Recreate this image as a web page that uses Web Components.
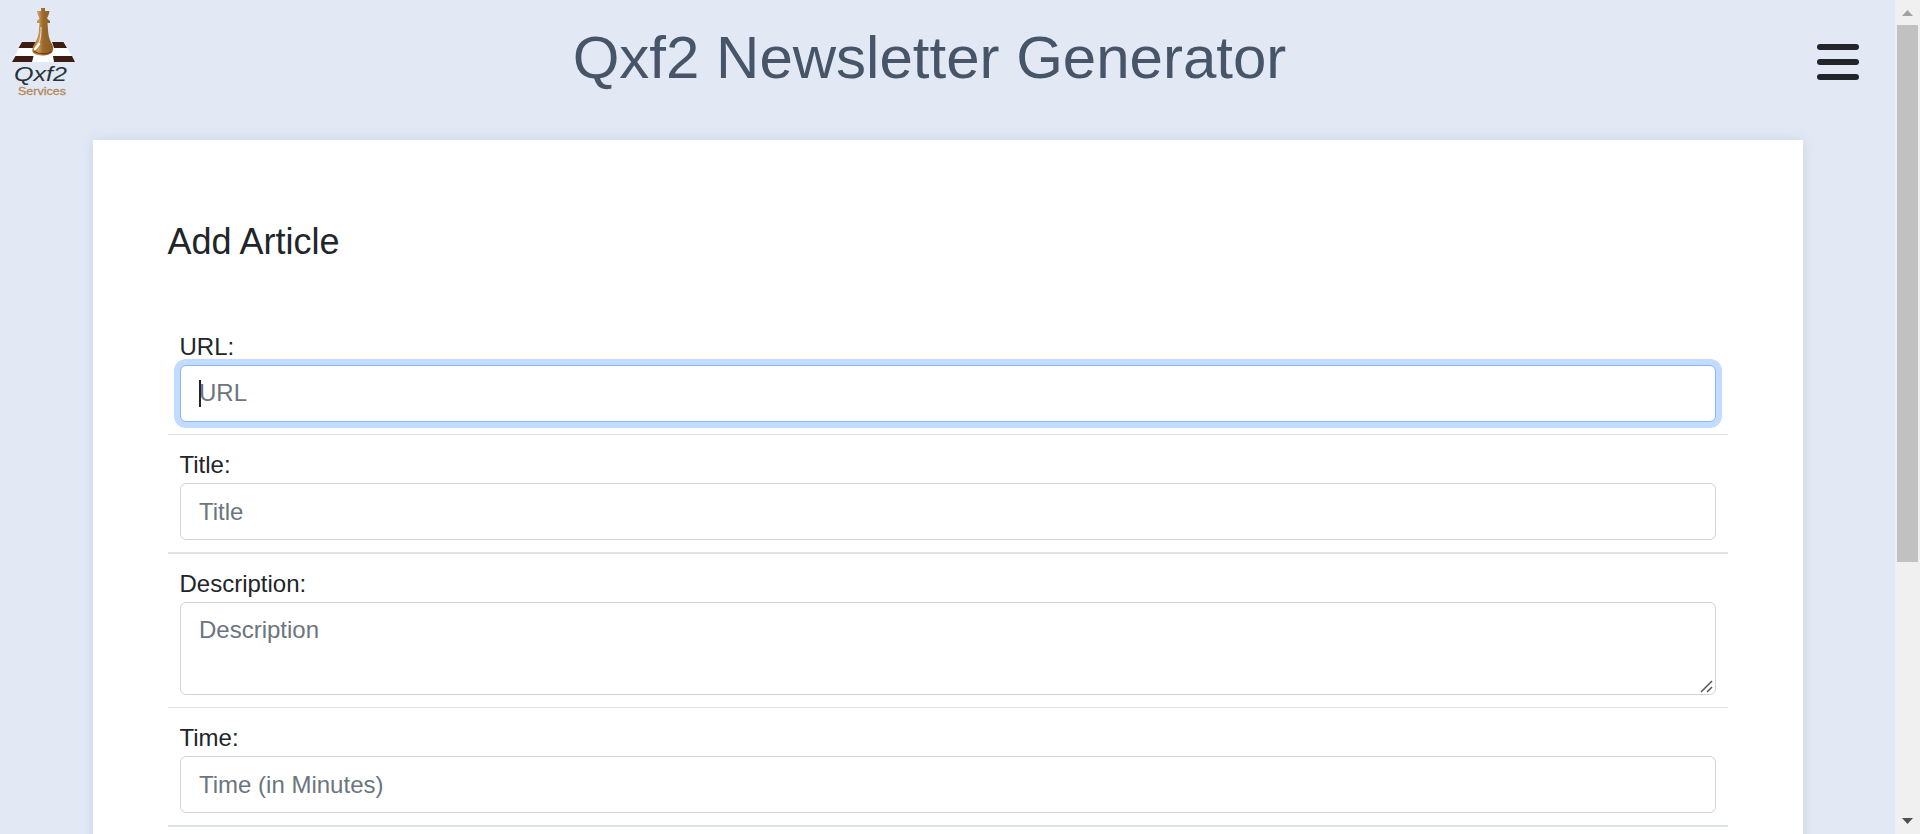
<!DOCTYPE html>
<html lang="en">
<head>
<meta charset="utf-8">
<title>Qxf2 Newsletter Generator</title>
<style>
html,body{margin:0;height:100%;overflow:hidden}
body{font-family:"Liberation Sans",Arial,sans-serif;font-size:24px;line-height:36px;color:#212529;background:#e2e9f5}
</style>
</head>
<body>
<news-app></news-app>
<script>
const define=(name,html,init)=>customElements.define(name,class extends HTMLElement{
  constructor(){super();const t=document.createElement('template');t.innerHTML=html;
    this.attachShadow({mode:'open'}).append(t.content.cloneNode(true));}
  connectedCallback(){if(init)init(this,this.shadowRoot);}
});

define('qxf-logo',`<style>:host{display:block;width:76px;height:100px}svg{display:block}text{font-family:"Liberation Sans",sans-serif}</style>
<svg width="76" height="100" viewBox="0 0 76 100">
<defs><linearGradient id="g"><stop offset="0" stop-color="#a8742f"/><stop offset=".3" stop-color="#c79a5a"/><stop offset=".5" stop-color="#9c6a2c"/><stop offset="1" stop-color="#8a5a24"/></linearGradient></defs>
<path d="M22 42H64L75 62H12Z" fill="#fff"/>
<path d="M22 42H36L35 48H18.500ZM52 42H63.500L67 48H54ZM15.500 56H33.500L32 62H12ZM53 56H72L75 62H54Z" fill="#3b1d12"/>
<path d="M41 8H45V11L49.500 11L48.500 15L47 18.500L50 21V23H47.500L48 30C48.500 37 50 41 52 44Q54 48 52.500 51.500Q50 55.500 43 55.500Q35 55.500 32.500 52Q32 47 34.500 43.500C37.500 39 39 34 39 28L39.500 23H37V21L39.500 18.500L38 15L37 11H41Z" fill="url(#g)"/>
<path d="M41 27Q41 38 39 43" stroke="#fff" stroke-width="1.200" fill="none" opacity=".65"/>
<path d="M35 49L39 44" stroke="#fff" stroke-width="2.500" stroke-linecap="round"/>
<path d="M34 51.500Q43 56 52 51.500" stroke="#7c3515" stroke-width="1.200" fill="none"/>
<text x="14" y="81" font-size="21" font-style="italic" fill="#29333a" textLength="53" lengthAdjust="spacingAndGlyphs">Qxf2</text>
<text x="18" y="94.500" font-size="11" fill="#b48755" stroke="#b48755" stroke-width=".3" textLength="48" lengthAdjust="spacingAndGlyphs">Services</text>
</svg>`);

define('menu-button',`<style>:host{display:flex;flex-direction:column;gap:9px;width:42px}i{height:6px;border-radius:3px;background:#212529}</style><i></i><i></i><i></i>`);

define('app-header',`<style>:host{display:flex;align-items:flex-start;height:140px;box-sizing:border-box;padding-right:36px}
h1{flex:1;margin:22px 0 0;padding-right:34px;text-align:center;font-size:60px;line-height:72px;font-weight:400;color:#475569}
menu-button{margin-top:44px}</style><qxf-logo></qxf-logo><h1><slot></slot></h1><menu-button></menu-button>`);

define('form-card',`<style>:host{display:block;box-sizing:border-box;margin:0 92px 0 93px;height:760px;padding:75px;background:#fff;box-shadow:0 0 12px rgba(70,105,165,.16)}
h2{margin:5px 0 65px -.5px;font-size:36px;line-height:44px;font-weight:400}</style><h2>Add Article</h2><slot></slot>`);

define('form-field',`<style>:host{display:block;padding:12px;border-bottom:var(--rule,1px) solid #dee2e6}
:host([first]){padding-top:0}
label{display:block;height:36px;margin-left:-.5px}
input,textarea{display:block;box-sizing:border-box;width:100%;height:57px;margin:0;padding:9px 18px;border:1px solid #ced4da;border-radius:6px;font:inherit;line-height:36px;color:#212529;background:#fff;outline:0}
textarea{height:93px;overflow:hidden;resize:none}
::placeholder{color:#6c757d;opacity:1}
.box{position:relative}
.grip{position:absolute;right:3px;bottom:2px;width:13px;height:13px}
:host([active]) input{border-color:#86b7fe;box-shadow:0 0 0 6px #c2dbfe;padding:8px 18px 10px}
:host([active]) .box::after{content:"";position:absolute;left:19px;top:15px;width:2px;height:27px;background:#212529}
</style><label></label><div class="box"></div>`,(h,r)=>{
  r.querySelector('label').textContent=h.getAttribute('label');
  const multi=h.hasAttribute('multiline');
  const f=document.createElement(multi?'textarea':'input');
  f.placeholder=h.getAttribute('hint');
  const box=r.querySelector('.box');
  box.replaceChildren(f);
  if(multi)box.insertAdjacentHTML('beforeend','<svg class="grip" viewBox="0 0 13 13"><path d="M1 12L12 1M7 12L12 7" stroke="#555" stroke-width="1.500" fill="none"/></svg>');
});

define('scroll-bar',`<style>:host{display:flex;flex-direction:column;box-sizing:border-box;width:25px;height:834px;background:#f0f0f0;padding:0 2px}
svg{display:block;width:21px;height:25px}.track{flex:1}.thumb{height:537px;background:#c1c1c1}</style>
<svg viewBox="0 0 21 25"><path d="M5 16L10.500 10L16 16Z" fill="#a3a3a3"/></svg><div class="track"><div class="thumb"></div></div><svg viewBox="0 0 21 25"><path d="M5 9H16L10.500 15Z" fill="#505050"/></svg>`);

define('news-app',`<style>:host{display:flex;height:834px;overflow:hidden}main{flex:1;height:834px;overflow:hidden}</style>
<main><app-header>Qxf2 Newsletter Generator</app-header>
<form-card>
<form-field first active label="URL:" hint="URL"></form-field>
<form-field label="Title:" hint="Title" style="--rule:2px"></form-field>
<form-field multiline label="Description:" hint="Description"></form-field>
<form-field label="Time:" hint="Time (in Minutes)" style="--rule:2px"></form-field>
</form-card></main><scroll-bar></scroll-bar>`);
</script>
</body>
</html>
